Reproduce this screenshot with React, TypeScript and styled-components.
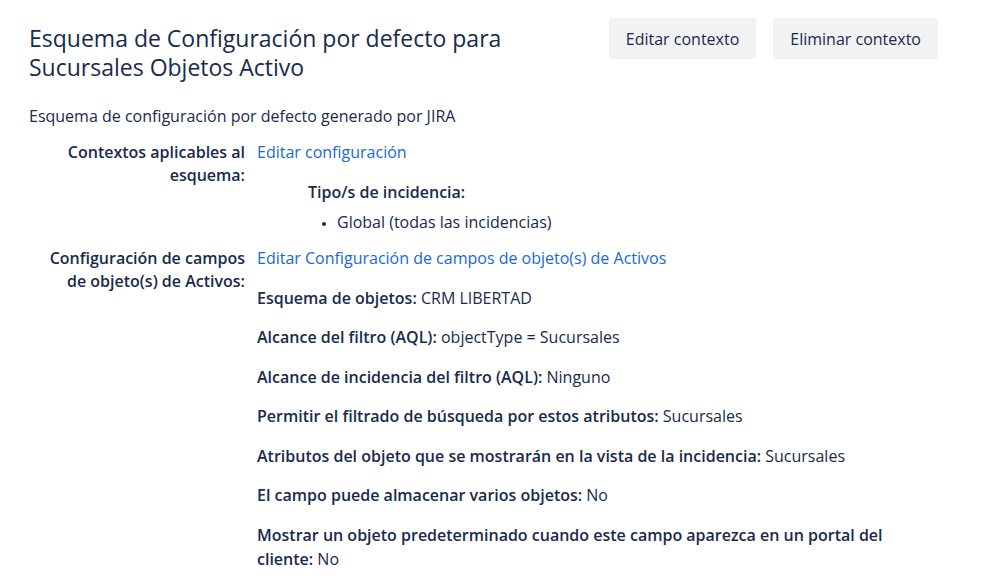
import React from 'react';
import styled, { createGlobalStyle } from 'styled-components';

const GlobalStyle = createGlobalStyle`
  body {
    margin: 0;
    background: #ffffff;
    font-family: "Open Sans", "Noto Sans", sans-serif;
    color: #172b4d;
  }
`;

const Page = styled.div`
  width: 999px;
  height: 576px;
  padding: 18px 0 0 29px;
  box-sizing: border-box;
  overflow: hidden;
`;

const Header = styled.div`
  display: flex;
  justify-content: space-between;
  align-items: flex-start;
  width: 909px;
`;

const Title = styled.h1`
  margin: 6px 0 0;
  font-size: 23px;
  font-weight: 500;
  line-height: 29px;
  color: #172b4d;
  width: 520px;
`;

const Actions = styled.div`
  display: flex;
  gap: 17px;
`;

const Button = styled.button`
  height: 41px;
  padding: 0 17px;
  border: none;
  border-radius: 3px;
  background: #f1f2f4;
  color: #172b4d;
  font-family: inherit;
  font-size: 16px;
`;

const Description = styled.p`
  margin: 22px 0 13px;
  font-size: 16px;
  line-height: 24px;
`;

const Row = styled.div`
  display: grid;
  grid-template-columns: 216px 650px;
  column-gap: 12px;
  font-size: 16px;
  line-height: 23px;
  margin-bottom: 13px;
`;

const Label = styled.div`
  text-align: right;
  font-weight: 600;
`;

const Link = styled.a`
  color: #1868db;
  text-decoration: none;
`;

const Types = styled.div`
  margin: 17px 0 0 51px;
`;

const TypesTitle = styled.div`
  font-weight: 600;
`;

const List = styled.ul`
  margin: 7px 0 0;
  padding-left: 29px;

  li::marker {
    font-size: 12px;
  }
`;

const Field = styled.p`
  margin: 15.5px 0 0;
  line-height: 24px;
`;

const Strong = styled.b`
  font-weight: 600;
`;

const fields: [string, string][] = [
  ['Esquema de objetos:', 'CRM LIBERTAD'],
  ['Alcance del filtro (AQL):', 'objectType = Sucursales'],
  ['Alcance de incidencia del filtro (AQL):', 'Ninguno'],
  ['Permitir el filtrado de búsqueda por estos atributos:', 'Sucursales'],
  ['Atributos del objeto que se mostrarán en la vista de la incidencia:', 'Sucursales'],
  ['El campo puede almacenar varios objetos:', 'No'],
  ['Mostrar un objeto predeterminado cuando este campo aparezca en un portal del cliente:', 'No'],
];

const App = () => {
  return (
    <Page>
      <GlobalStyle />
      <Header>
        <Title>Esquema de Configuración por defecto para Sucursales Objetos Activo</Title>
        <Actions>
          <Button>Editar contexto</Button>
          <Button>Eliminar contexto</Button>
        </Actions>
      </Header>
      <Description>Esquema de configuración por defecto generado por JIRA</Description>
      <Row>
        <Label>Contextos aplicables al esquema:</Label>
        <div>
          <Link href="#">Editar configuración</Link>
          <Types>
            <TypesTitle>Tipo/s de incidencia:</TypesTitle>
            <List>
              <li>Global (todas las incidencias)</li>
            </List>
          </Types>
        </div>
      </Row>
      <Row>
        <Label>Configuración de campos de objeto(s) de Activos:</Label>
        <div>
          <Link href="#">Editar Configuración de campos de objeto(s) de Activos</Link>
          {fields.map(([k, v]) => (
            <Field key={k}>
              <Strong>{k}</Strong> {v}
            </Field>
          ))}
        </div>
      </Row>
    </Page>
  );
};

export default App;
